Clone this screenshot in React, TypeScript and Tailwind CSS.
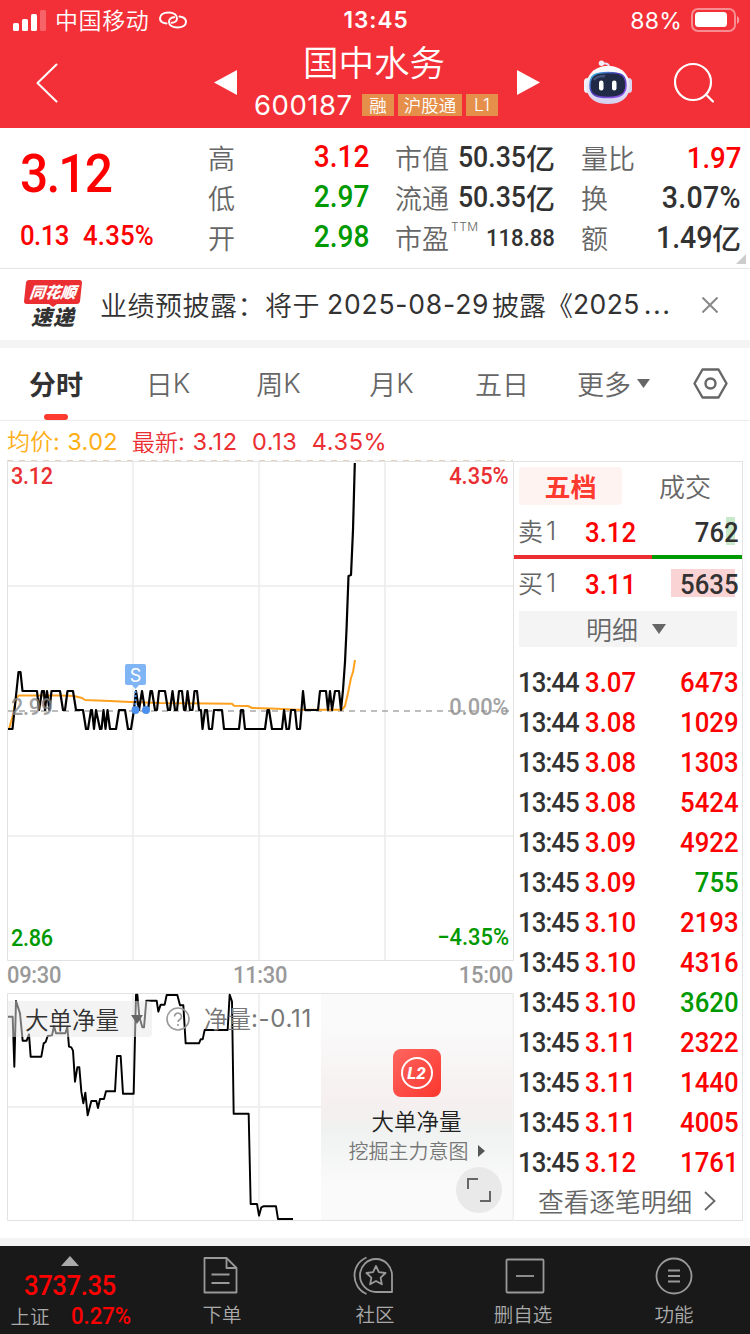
import type { ReactNode } from "react";
import clsx from "clsx";

type Tone = "up" | "down" | "plain";

const toneClass: Record<Tone, string> = {
  up: "text-[#fe0000]",
  down: "text-[#009900]",
  plain: "text-[#323232]",
};

const stats: { label: string; value: string; tone: Tone; unit?: string; ttm?: boolean; size: string }[] = [
  { label: "高", value: "3.12", tone: "up", size: "text-[30.5px]" },
  { label: "市值", value: "50.35", unit: "亿", tone: "plain", size: "text-[29px]" },
  { label: "量比", value: "1.97", tone: "up", size: "text-[30px]" },
  { label: "低", value: "2.97", tone: "down", size: "text-[30.5px]" },
  { label: "流通", value: "50.35", unit: "亿", tone: "plain", size: "text-[29px]" },
  { label: "换", value: "3.07%", tone: "plain", size: "text-[31px] tracking-[0.3px]" },
  { label: "开", value: "2.98", tone: "down", size: "text-[30.5px]" },
  { label: "市盈", value: "118.88", tone: "plain", ttm: true, size: "text-[24px]" },
  { label: "额", value: "1.49", unit: "亿", tone: "plain", size: "text-[31px]" },
];

const trades: { time: string; price: string; volume: string; tone: Tone }[] = [
  { time: "13:44", price: "3.07", volume: "6473", tone: "up" },
  { time: "13:44", price: "3.08", volume: "1029", tone: "up" },
  { time: "13:45", price: "3.08", volume: "1303", tone: "up" },
  { time: "13:45", price: "3.08", volume: "5424", tone: "up" },
  { time: "13:45", price: "3.09", volume: "4922", tone: "up" },
  { time: "13:45", price: "3.09", volume: "755", tone: "down" },
  { time: "13:45", price: "3.10", volume: "2193", tone: "up" },
  { time: "13:45", price: "3.10", volume: "4316", tone: "up" },
  { time: "13:45", price: "3.10", volume: "3620", tone: "down" },
  { time: "13:45", price: "3.11", volume: "2322", tone: "up" },
  { time: "13:45", price: "3.11", volume: "1440", tone: "up" },
  { time: "13:45", price: "3.11", volume: "4005", tone: "up" },
  { time: "13:45", price: "3.12", volume: "1761", tone: "up" },
];

const pricePoints =
  "8,729 12.5,729 18.5,672 20.5,672 22.5,691 37,691 39,710 42,691 44,691 45,710 47,691 49.5,710 51.5,691 60,691 63,710 65,710 67.5,691 73,691 76,710 83,710 86,729 88,729 91,710 92,710 94,729 96,710 100,729 101.5,729 103.5,710 105.5,729 107.5,710 110,729 116,729 119,710 125,710 128,729 131,729 134,710 136,691 139,710 142,691 145,710 148,710 150.5,691 152,691 155,710 157,710 159,691 165,691 168,710 170,710 172.5,691 175,710 177,710 179,691 182,691 184,710 185.5,710 187.5,691 190,710 192.5,710 194.5,691 197,691 199,710 201,710 202.5,729 205,710 207,710 209,729 212,729 214,710 222,710 224,729 239,729 241,710 243,710 245,729 265,729 267.5,710 269,710 272,729 282,729 284,710 286.5,729 289,729 291,710 295,710 297,729 300,729 303,691 305,710 318,710 320,691 326,691 328,710 330,691 332,710 335,691 339,691 341,710 343,690 345,662 346.5,630 348.5,576 351,575 353,530 354.8,463";

const averagePoints =
  "9,729 13,715 16,698 19,695.5 60,695.5 74,696 82,698 85,700 110,701 130,702 160,703 232,703.7 234,705.7 248,706 252,708 277,708.7 297,709.7 342,709.7 345,706 348,693 351,678 353,672 355,660";

const netPoints =
  "24,290 38,290 43,440 48,243 60,280 68,362 80,362 87,343 92,410 124,410 131,370 137,366 143,348 156,346 162,318 168,340 196,340 202,320 207,380 214,382 219,392 225,485 232,442 238,442 244,515 250,550 256,518 263,586 274,543 289,543 294,564 300,537 312,537 318,514 345,514 351,408 362,408 369,521 401,521 408,224 412,224 418,290 427,322 432,322 439,242 470,242 475,275 482,254 494,254 500,225 532,225 540,256 550,256 557,370 597,370 602,358 608,358 614,330 683,330 689,224 696,245 701,581 746,581 752,852 771,852 777,887 784,862 790,859 828,859 834,897 879,897";

// Narrow bold figures used for every price and volume
function Num({ className, children }: { className?: string; children: ReactNode }) {
  return (
    <span className={clsx("block scale-x-[0.92] whitespace-nowrap font-[Roboto,sans-serif] font-medium leading-none", className)}>
      {children}
    </span>
  );
}

function StatusBar() {
  return (
    <div className="grid h-10 grid-cols-3 items-center pr-[10px] pl-[13px]">
      <div className="flex items-center">
        <svg width="33" height="22" viewBox="0 0 33 22" fill="#fff">
          <rect x="0" y="14" width="6" height="8" rx="1.5" />
          <rect x="9" y="10" width="6" height="12" rx="1.5" />
          <rect x="18" y="5" width="6" height="17" rx="1.5" />
          <rect x="27" y="1" width="6" height="21" rx="1.5" opacity=".25" />
        </svg>
        <span className="-mt-[2px] ml-[9px] text-[23px] leading-none tracking-[0.6px]">中国移动</span>
        <svg className="ml-[10px]" width="28" height="18" viewBox="0 0 28 18" fill="none" stroke="#fff" strokeWidth="2" strokeLinecap="round">
          <path d="M7.500 12.500C3.500 12 1 10 1 7.200C1 3.800 4.500 1.500 9.500 1.500C14.500 1.500 18 3.800 18 7.200C18 10 15.500 11.800 12.800 11.800" />
          <path d="M20.500 5.500C24.500 6 27 8 27 10.800C27 14.200 23.500 16.500 18.500 16.500C13.500 16.500 10 14.200 10 10.800C10 8 12.500 6.200 15.200 6.200" />
        </svg>
      </div>
      <span className="pt-px pr-[1px] text-center font-[Inter,sans-serif] text-[22.500px] font-semibold leading-none tracking-[1px]">13:45</span>
      <div className="flex items-center justify-end">
        <span className="pt-[2px] font-[Inter,sans-serif] text-[23px] font-normal leading-none tracking-[0.2px]">88%</span>
        <svg className="ml-[9px]" width="49" height="24" viewBox="0 0 49 24" fill="none">
          <rect x="1" y="1" width="43" height="22" rx="6" stroke="#fff" strokeOpacity=".45" strokeWidth="2" />
          <rect x="4" y="4" width="32" height="15" rx="3.500" fill="#fff" />
          <path d="M46 8c3 1.500 3 6.500 0 8z" fill="#fff" fillOpacity=".5" />
        </svg>
      </div>
    </div>
  );
}

function Robot() {
  return (
    <svg width="50" height="46" viewBox="0 0 50 46">
      <defs>
        <linearGradient id="shell" x1="0" y1="0" x2="0" y2="1">
          <stop offset="0" stopColor="#fff" />
          <stop offset="1" stopColor="#d3d0ee" />
        </linearGradient>
        <linearGradient id="rim" x1="0" y1="0" x2="1" y2="1">
          <stop offset="0" stopColor="#35c5e8" />
          <stop offset=".4" stopColor="#4b3bb8" />
          <stop offset="1" stopColor="#9a5cf0" />
        </linearGradient>
      </defs>
      <path d="M19 3.500h3c3 0 4 2 4 4" fill="none" stroke="#e6e2f4" strokeWidth="2" />
      <circle cx="18.500" cy="3.200" r="2.700" fill="#f1eef8" />
      <rect x="1" y="18" width="7" height="15" rx="3.500" fill="#f2f0fa" />
      <rect x="42" y="18" width="7" height="15" rx="3.500" fill="#d9d6f0" />
      <path d="M25 6C38 6 46.500 14 46.500 26C46.500 38 38 44 25 44C12 44 3.500 38 3.500 26C3.500 14 12 6 25 6Z" fill="url(#shell)" />
      <path d="M25 12.500C38 12.500 43 15 43 25C43 35 37 37.500 25 37.500C13 37.500 7 35 7 25C7 15 12 12.500 25 12.500Z" fill="#202946" stroke="url(#rim)" strokeWidth="1.500" />
      <path d="M11 20c2-4 7-4 11-4" fill="none" stroke="#42507a" strokeWidth="2.500" />
      <rect x="16" y="20.500" width="4.500" height="10" rx="2.200" fill="#fff" />
      <rect x="29" y="20.500" width="4.500" height="10" rx="2.200" fill="#fff" />
    </svg>
  );
}

function Tag({ className, children }: { className: string; children: ReactNode }) {
  return (
    <span className={clsx("flex h-[22px] shrink-0 justify-center bg-[#e58f4b] text-[17.500px] leading-[21px]", className)}>
      {children}
    </span>
  );
}

function Header() {
  return (
    <header className="h-32 bg-[#f33038] text-white">
      <StatusBar />
      <div className="flex h-[88px]">
        <svg className="mt-[23px] ml-[36px] shrink-0" width="22" height="40" viewBox="0 0 22 40" fill="none" stroke="#fff" strokeWidth="2" strokeLinecap="round" strokeLinejoin="round">
          <path d="M20.500 1.500 1.500 20l19 18.500" />
        </svg>
        <svg className="mt-[29px] ml-[156px] shrink-0" width="24" height="27" viewBox="0 0 24 27" fill="#fff">
          <path d="M0 13.500 23 1v25z" />
        </svg>
        <div className="ml-[16px] flex w-[244px] shrink-0 flex-col">
          <h1 className="mt-[3px] pr-[4px] text-center text-[35.500px] leading-[36px]">国中水务</h1>
          <div className="mt-[13px] flex items-center gap-1 whitespace-nowrap">
            <span className="w-[104px] shrink-0 font-[Inter,sans-serif] text-[27.500px] font-normal leading-[26px] tracking-[0.5px]">600187</span>
            <Tag className="w-8">融</Tag>
            <Tag className="w-16">沪股通</Tag>
            <Tag className="w-8 font-[Inter,sans-serif]">L1</Tag>
          </div>
        </div>
        <svg className="mt-[29px] ml-[19px] shrink-0" width="24" height="27" viewBox="0 0 24 27" fill="#fff">
          <path d="M23 13.500 0 1v25z" />
        </svg>
        <div className="mt-[20px] ml-[42px] shrink-0">
          <Robot />
        </div>
        <svg className="mt-[22px] ml-[41px] shrink-0" width="42" height="42" viewBox="0 0 42 42" fill="none" stroke="#fff" strokeWidth="2.200">
          <circle cx="19" cy="20" r="18" />
          <path d="m32 32.500 7 7" strokeLinecap="round" />
        </svg>
      </div>
    </header>
  );
}

function QuoteSummary() {
  return (
    <section className="relative flex h-[141px] border-b border-[#e6e6e6] bg-white">
      <div className="flex w-[208px] shrink-0 flex-col pl-[20px] text-[#fe0000]">
        <Num className="mt-[19px] origin-left text-[54px] tracking-[-2px]">3.12</Num>
        <div className="mt-[21px] flex">
          <Num className="w-[63px] origin-left text-[28px] tracking-[-0.6px]">0.13</Num>
          <Num className="origin-left text-[28px] tracking-[0.2px]">4.35%</Num>
        </div>
      </div>
      <dl className="mt-[10px] grid h-[120px] w-[533px] shrink-0 grid-cols-[161px_160px_160px] grid-rows-3 gap-x-[26px]">
        {stats.map((stat) => (
          <div key={stat.label} className="flex items-center justify-between">
            <dt className="-mt-[2px] flex text-[27px] leading-none text-[#666]">
              {stat.label}
              {stat.ttm && <sup className="-top-[3px] ml-[2px] font-[Inter,sans-serif] text-[12px] leading-none tracking-[0.5px]">TTM</sup>}
            </dt>
            <dd className={clsx("-mt-px flex items-center", toneClass[stat.tone])}>
              <Num className={clsx("origin-right", stat.size)}>{stat.value}</Num>
              {stat.unit && <span className="-mt-px text-[29px] font-medium leading-none">{stat.unit}</span>}
            </dd>
          </div>
        ))}
      </dl>
      <svg className="absolute right-[4px] bottom-[4px]" width="10" height="10" viewBox="0 0 10 10">
        <path d="M10 0v10H0z" fill="#ccc" />
      </svg>
    </section>
  );
}

function NewsBar() {
  return (
    <section className="flex h-[79px] items-center border-b-8 border-[#f4f4f4] bg-white pl-[24px] text-[27px] text-[#323232]">
      <div className="-mt-[3px] flex w-[58px] shrink-0 flex-col items-center font-black italic leading-none">
        <div className="flex h-[24px] w-[56px] -skew-x-6 items-center justify-center rounded-[3px] bg-[#ea2e31] text-[15.500px] text-white">同花顺</div>
        <svg width="8" height="3" viewBox="0 0 8 3">
          <path d="M0 0h8L4 3z" fill="#ea2e31" />
        </svg>
        <div className="-mt-[1px] text-[21px] tracking-[1px]">速递</div>
      </div>
      <p className="-mt-[1px] ml-[18px] flex w-[581px] shrink-0 items-center whitespace-nowrap leading-none">
        <span className="w-[227px] tracking-[0.5px]">业绩预披露：将于</span>
        <span className="w-[165px] font-[Inter,sans-serif] text-[26.500px] font-normal tracking-[0.8px]">2025-08-29</span>
        <span className="w-[81px]">披露《</span>
        <span className="font-[Inter,sans-serif] text-[26.500px] font-normal tracking-[0.4px]">2025</span>
        <span className="ml-1 font-[Inter,sans-serif] font-normal tracking-[1.500px]">...</span>
      </p>
      <svg className="ml-[21px] shrink-0" width="16" height="16" viewBox="0 0 16 16" stroke="#888" strokeWidth="2">
        <path d="m.5.5 15 15M15.500.5l-15 15" />
      </svg>
    </section>
  );
}

function KTab({ className, children }: { className: string; children: ReactNode }) {
  return (
    <span className={clsx("flex justify-center pt-[22px]", className)}>
      {children}
      <span className="font-[Inter,sans-serif]">K</span>
    </span>
  );
}

function PeriodTabs() {
  return (
    <nav className="flex h-[73px] border-b border-[#ececec] bg-white text-[27px] leading-none text-[#666]">
      <div className="flex w-[112px] flex-col items-center pt-[22px]">
        <span className="font-bold text-[#323232]">分时</span>
        <span className="mt-[17px] h-[6px] w-[24px] rounded-full bg-[#ff3b30]" />
      </div>
      <KTab className="w-[112px]">日</KTab>
      <KTab className="w-[109px]">周</KTab>
      <KTab className="w-[117px]">月</KTab>
      <span className="w-[104px] pt-[22px] text-center">五日</span>
      <div className="flex w-[139px] pt-[22px] pl-[23px]">
        <span>更多</span>
        <svg className="mt-[9px] ml-[6px]" width="13" height="9" viewBox="0 0 13 9" fill="#666">
          <path d="M0 0h13L6.500 9z" />
        </svg>
      </div>
      <svg className="mt-[20px]" width="35" height="31" viewBox="0 0 35 31" fill="none" stroke="#666" strokeWidth="2.400">
        <path d="M9.500 1.500h16L33.500 15.500l-8 14h-16L1.500 15.500z" strokeLinejoin="round" />
        <circle cx="17.500" cy="15.500" r="5" />
      </svg>
    </nav>
  );
}

function PriceChart() {
  return (
    <div className="relative h-[501px]">
      <svg width="507" height="501" viewBox="7 460 507 501" fill="none">
        <g stroke="#ececec" strokeWidth="1.500">
          <path d="M133 461v499M259 461v499M385 461v499" />
          <path d="M8 586h505M8 836h505" />
        </g>
        <path d="M7.500 461.500h506v499h-506z" stroke="#e2e2e2" />
        <path d="M7 460.500h506" stroke="#e6d3bd" strokeDasharray="6 6" />
        <path d="M8 711h505" stroke="#a8a8a8" strokeWidth="1.500" strokeDasharray="6 5" />
        <polyline points={averagePoints} stroke="#ffa11f" strokeWidth="2" strokeLinejoin="round" />
        <polyline points={pricePoints} stroke="#000" strokeWidth="2.200" strokeLinejoin="round" />
        <path d="M135.500 691v18" stroke="#4a90ee" strokeWidth="2" strokeDasharray="2 2" />
        <circle cx="135.500" cy="710" r="4" fill="#4a90ee" />
        <circle cx="146" cy="710" r="4" fill="#4a90ee" />
        <path d="M127 664h17a2 2 0 0 1 2 2v17a2 2 0 0 1-2 2h-5l-3.500 4-3.500-4h-5a2 2 0 0 1-2-2v-17a2 2 0 0 1 2-2z" fill="#7fb4f5" />
      </svg>
      <span className="absolute top-[206px] left-[118px] w-[21px] text-center font-[Inter,sans-serif] text-[18px] font-normal leading-[19px] text-white">S</span>
      <Num className="absolute top-[5px] left-[4px] origin-left text-[23.500px] tracking-[-0.3px] text-[#ea2e31]">3.12</Num>
      <Num className="absolute top-[5px] right-[5px] origin-right text-[23.800px] text-[#ea2e31]">4.35%</Num>
      <Num className="absolute top-[236px] left-[4px] origin-left text-[23.500px] tracking-[-0.3px] text-[#888]/80">2.99</Num>
      <Num className="absolute top-[236px] right-[5px] origin-right text-[23.800px] text-[#888]/80">0.00%</Num>
      <Num className="absolute bottom-[11px] left-[4px] origin-left text-[23.500px] tracking-[-0.3px] text-[#009900]">2.86</Num>
      <Num className="absolute right-[5px] bottom-[11px] origin-right text-[23.800px] text-[#009900]">−4.35%</Num>
    </div>
  );
}

function NetVolumeChart() {
  return (
    <div className="relative flex h-[228px]">
      <svg width="507" height="228" viewBox="21 219 1521 684" fill="none">
        <path d="M399 220v682M777 220v682M24 561h940" stroke="#ececec" strokeWidth="4.500" />
        <path d="M22.500 220.500h1517v681h-1517z" stroke="#e2e2e2" strokeWidth="3" />
        <polyline points={netPoints} stroke="#000" strokeWidth="5.800" strokeLinejoin="round" />
      </svg>
      <div className="absolute top-[8px] left-[1px] flex h-[36px] w-[144px] items-center rounded-r bg-[#e8e8e8]/50 pt-px pl-[17px] text-[23.500px] leading-none text-[#323232]">
        大单净量
        <svg className="ml-[12px]" width="12" height="9" viewBox="0 0 12 9" fill="#666">
          <path d="M0 0h12L6 9z" />
        </svg>
      </div>
      <div className="absolute top-[13px] left-[159px] flex items-center text-[23.500px] leading-none text-[#777]">
        <svg width="24" height="24" viewBox="0 0 24 24" fill="none" stroke="#999" strokeWidth="1.600">
          <circle cx="12" cy="12" r="11" />
          <path d="M8.500 9.500a3.500 3.500 0 1 1 5.300 3c-1.200.8-1.800 1.300-1.800 2.500" />
          <path d="M12 17v2" />
        </svg>
        <span className="ml-[14px]">净量</span>
        <span className="pt-px font-[Inter,sans-serif] text-[24px] font-normal tracking-[0.7px]">:-0.11</span>
      </div>
      <div className="absolute top-px left-[314px] flex h-[226px] w-[191px] flex-col items-center bg-[#fafafa] bg-[linear-gradient(180deg,#fafafa_15%,#f6efef_48%,#eff2f0_60%,#fafafa_85%)] pt-[55px]">
        <svg width="48" height="48" viewBox="0 0 48 48">
          <defs>
            <linearGradient id="l2" x1="0" y1="0" x2="1" y2="1">
              <stop offset="0" stopColor="#ff6560" />
              <stop offset="1" stopColor="#fa372e" />
            </linearGradient>
          </defs>
          <rect width="48" height="48" rx="8" fill="url(#l2)" />
          <circle cx="24" cy="24" r="15" fill="none" stroke="#fff" strokeWidth="2" />
          <text x="23.500" y="30" textAnchor="middle" fill="#fff" fontFamily="Roboto, sans-serif" fontSize="17" fontWeight="800" fontStyle="italic">L2</text>
        </svg>
        <span className="mt-[12px] text-[22.500px] leading-none text-[#222]">大单净量</span>
        <span className="mt-[9px] flex items-center text-[20px] leading-none text-[#777]">
          挖掘主力意图
          <svg className="ml-[9px]" width="7" height="12" viewBox="0 0 7 12" fill="#555">
            <path d="M0 0v12l7-6z" />
          </svg>
        </span>
        <span className="absolute right-[10px] bottom-[7px] flex size-[46px] items-center justify-center rounded-full bg-[#e9e9e9]">
          <svg width="24" height="24" viewBox="0 0 24 24" fill="none" stroke="#666" strokeWidth="2">
            <path d="M1 11V1h10M23 13v10H13" />
          </svg>
        </span>
      </div>
    </div>
  );
}

function ChartPanel() {
  return (
    <div className="w-[507px] shrink-0">
      <PriceChart />
      <div className="flex h-[32px] text-[#999]">
        <Num className="w-[226px] origin-left pt-[3px] text-[23.800px] tracking-[-0.3px]">09:30</Num>
        <Num className="w-[120px] origin-left pt-[3px] text-[23.800px] tracking-[-0.3px]">11:30</Num>
        <Num className="w-[160px] origin-right pt-[3px] text-right text-[23.800px] tracking-[-0.3px]">15:00</Num>
      </div>
      <NetVolumeChart />
    </div>
  );
}

function OrderLine({ side, price, volume, children }: { side: string; price: string; volume: string; children: ReactNode }) {
  return (
    <div className="relative flex h-[42px] items-center pl-[4px] text-[25px] leading-none text-[#666]">
      {children}
      <span className="relative -mt-[2px] flex w-[67px]">
        {side}
        <span className="ml-[3px] font-[Inter,sans-serif] text-[26px] tracking-tight">1</span>
      </span>
      <Num className="relative mt-[2px] origin-left text-[28px]">
        <span className="text-[#fe0000]">{price}</span>
      </Num>
      <Num className="relative mt-[2px] mr-[3px] ml-auto origin-right text-[28px] text-[#323232]">{volume}</Num>
    </div>
  );
}

function OrderPanel() {
  return (
    <aside className="mt-px h-[760px] w-[229px] shrink-0 border-t border-r border-b border-[#e2e2e2]">
      <div className="flex h-[49px] pt-[5px] pl-[5px] text-[26px] leading-none">
        <span className="flex h-[38px] w-[103px] shrink-0 justify-center rounded bg-[#fff3f2] leading-[37px] font-bold text-[#ff3b30]">五档</span>
        <span className="flex h-[38px] flex-1 justify-center pl-[6px] leading-[37px] text-[#666]">成交</span>
      </div>
      <OrderLine side="卖" price="3.12" volume="762">
        <span className="absolute top-[6px] right-[7px] h-[28px] w-[9px] bg-[#c9e9cb]" />
      </OrderLine>
      <div className="mt-[2px] flex h-[4px]">
        <span className="w-[138px] bg-[#ea2e31]" />
        <span className="flex-1 bg-[#009900]" />
      </div>
      <div className="mt-[4px]">
        <OrderLine side="买" price="3.11" volume="5635">
          <span className="absolute top-[6px] right-[7px] h-[28px] w-[64px] bg-[#fad4d5]" />
        </OrderLine>
      </div>
      <div className="mt-[6px] ml-[5px] flex h-[36px] w-[218px] items-center justify-center bg-[#f4f4f4] pr-[4px] text-[26px] leading-none text-[#666]">
        明细
        <svg className="ml-[14px]" width="14" height="10" viewBox="0 0 14 10" fill="#666">
          <path d="M0 0h14L7 10z" />
        </svg>
      </div>
      <ul className="mt-[16px]">
        {trades.map((trade, index) => (
          <li key={index} className="flex h-[40px] items-center pr-[3px] pl-[4px]">
            <Num className="w-[67px] origin-left text-[28px] tracking-[-1px] text-[#323232]">{trade.time}</Num>
            <Num className="origin-left text-[28px] text-[#fe0000]">{trade.price}</Num>
            <Num className={clsx("ml-auto origin-right text-[28px]", toneClass[trade.tone])}>{trade.volume}</Num>
          </li>
        ))}
      </ul>
      <div className="flex h-[36px] items-center pl-[24px] text-[25.700px] leading-none text-[#666]">
        查看逐笔明细
        <svg className="ml-[12px]" width="12" height="20" viewBox="0 0 12 20" fill="none" stroke="#666" strokeWidth="1.800">
          <path d="m1 1 9.500 9L1 19" />
        </svg>
      </div>
    </aside>
  );
}

function NavItem({ className, label, children }: { className: string; label: string; children: ReactNode }) {
  return (
    <div className={clsx("flex flex-col items-center pt-[10px]", className)}>
      <svg width="44" height="40" viewBox="0 0 44 40" fill="none" stroke="#999" strokeWidth="1.800" strokeLinejoin="round">
        {children}
      </svg>
      <span className="mt-[8px] text-[19.500px] leading-none">{label}</span>
    </div>
  );
}

function BottomBar() {
  return (
    <footer className="flex h-[88px] bg-[#191919] text-[#aaa]">
      <div className="flex w-[140px] shrink-0 flex-col items-center pt-[10px]">
        <svg width="18" height="10" viewBox="0 0 18 10" fill="#aaa">
          <path d="M9 0 18 10H0z" />
        </svg>
        <Num className="mt-[6px] text-[28px] tracking-[-0.5px] text-[#fe0000]">3737.35</Num>
        <div className="mt-[4px] flex w-[119px] items-center">
          <span className="w-[60px] shrink-0 text-[19.500px] leading-none">上证</span>
          <Num className="origin-left text-[24px] text-[#fe0000]">0.27%</Num>
        </div>
      </div>
      <NavItem className="w-[164px]" label="下单">
        <path d="M4.500 2h22l10 10v24.500h-32z" />
        <path d="M26.500 2v10h10M11.500 18.500h18M11.500 27h18" />
      </NavItem>
      <NavItem className="w-[142px]" label="社区">
        <path d="M39 36V19.500A16 16.500 0 1 0 23 36z" />
        <path d="M13.500 1.500C-2.500 8-2.500 31 13.500 38" />
        <path d="m23 10 2.900 6.200 6.700.8-5 4.600 1.300 6.700-5.900-3.300-5.900 3.300 1.300-6.700-5-4.600 6.700-.8z" />
      </NavItem>
      <NavItem className="w-[154px]" label="删自选">
        <rect x="5.500" y="3.500" width="37" height="33" rx="1" />
        <path d="M15 20h18" />
      </NavItem>
      <NavItem className="w-[148px]" label="功能">
        <circle cx="22" cy="20" r="17.500" />
        <path d="M16 14.500h12M16 20h12M16 25.500h12" />
      </NavItem>
    </footer>
  );
}

export default function App() {
  return (
    <div className="h-[1334px] w-[750px] overflow-hidden bg-white font-['Noto_Sans_CJK_SC',sans-serif] font-[350]">
      <Header />
      <QuoteSummary />
      <NewsBar />
      <PeriodTabs />
      <div className="flex h-[39px] items-center pt-[2px] pl-[7px] text-[23px] leading-none whitespace-pre text-[#ea2e31]">
        <span className="w-[125px] text-[#ffae15]">
          均价<span className="font-[Inter,sans-serif] text-[23.500px] font-normal tracking-[0.4px]">: 3.02</span>
        </span>
        <span>最新</span>
        <span className="font-[Inter,sans-serif] text-[23.500px] font-normal tracking-[0.6px]">: 3.12  0.13  4.35%</span>
      </div>
      <main className="flex h-[778px] pl-[7px]">
        <ChartPanel />
        <OrderPanel />
      </main>
      <div className="h-[8px] bg-[#f4f4f4]" />
      <BottomBar />
    </div>
  );
}
